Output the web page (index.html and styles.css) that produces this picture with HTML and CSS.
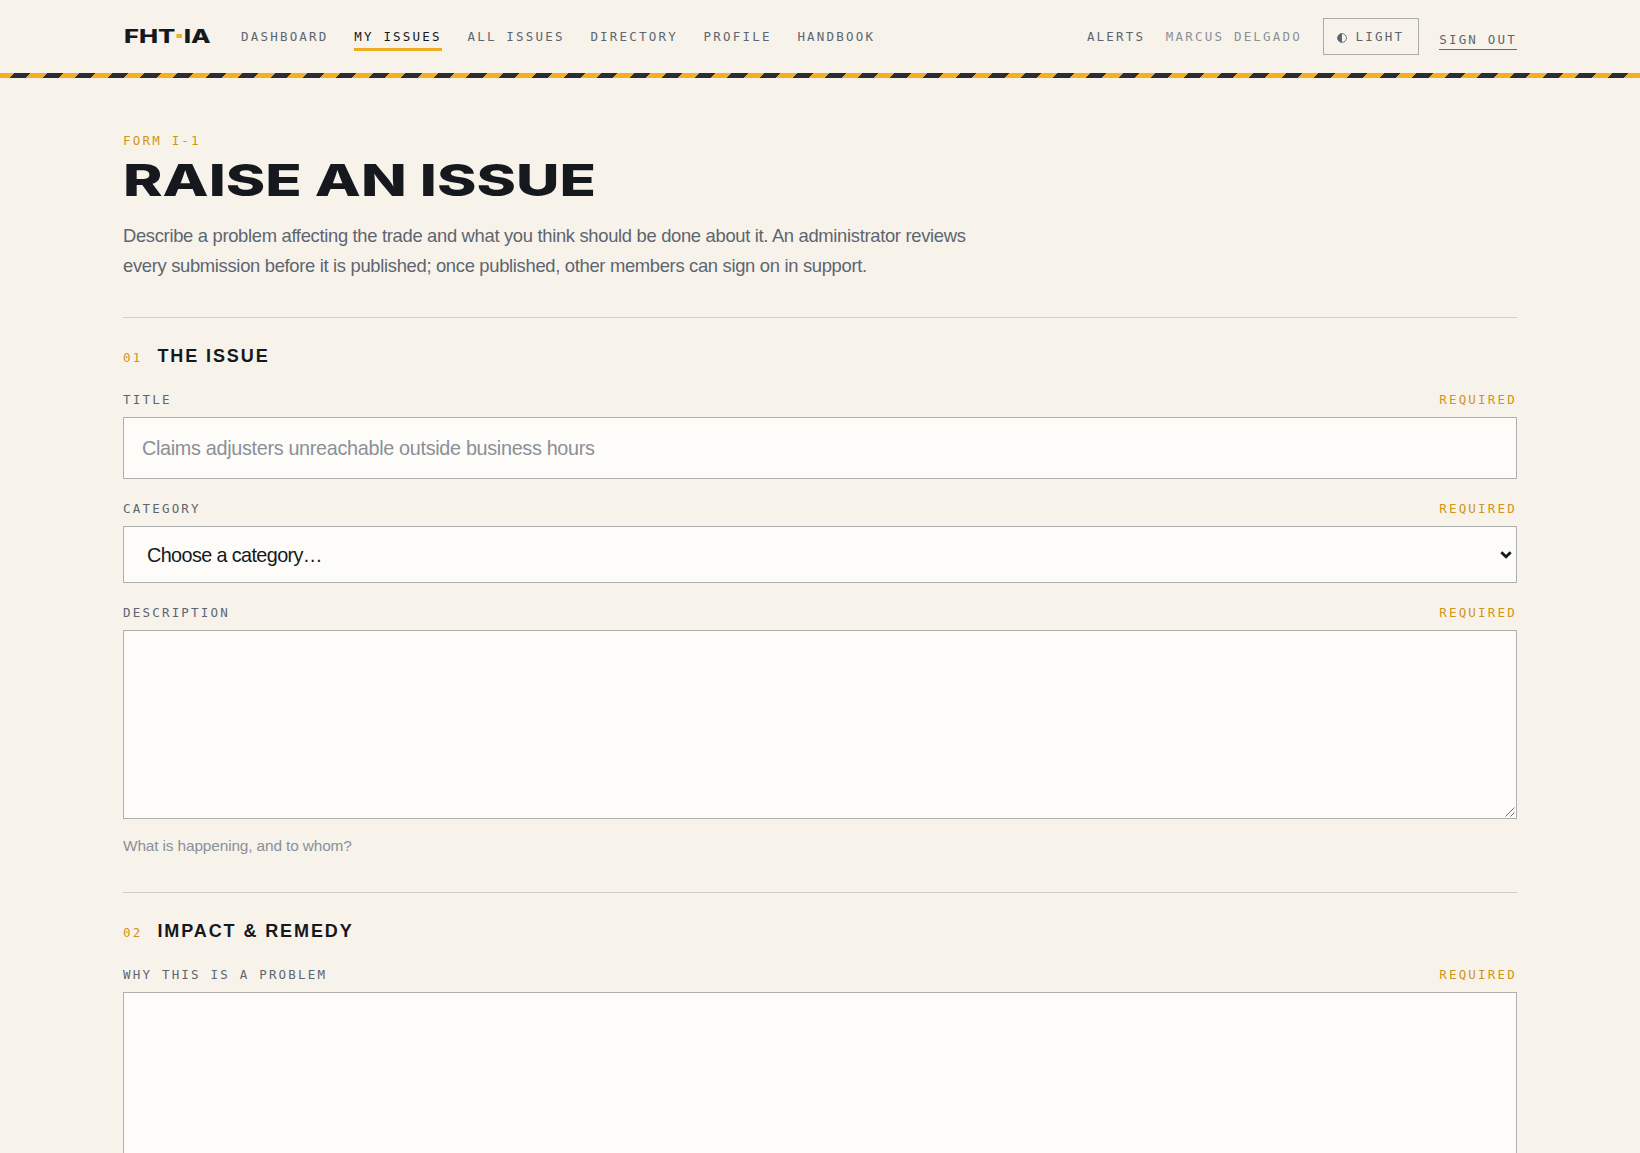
FILE: index.html
```html
<!DOCTYPE html>
<html lang="en">
<head>
  <meta charset="UTF-8">
  <title>Raise an Issue</title>
  <link rel="stylesheet" href="styles.css">
</head>
<body>
  <header class="site-header">
    <div class="header-inner">
      <a class="logo"><span class="logo-text">FHT<i class="logo-dot"></i>IA</span></a>
      <nav class="main-nav">
        <a>Dashboard</a>
        <a class="active">My Issues</a>
        <a>All Issues</a>
        <a>Directory</a>
        <a>Profile</a>
        <a>Handbook</a>
      </nav>
      <div class="user-nav">
        <a>Alerts</a>
        <span class="user-name">Marcus Delgado</span>
        <button class="theme-btn" type="button">
          <svg class="theme-icon" viewBox="0 0 10 10"><circle cx="5" cy="5" r="4.4" fill="none" stroke="currentColor" stroke-width="0.9"/><path d="M5 .6a4.4 4.4 0 0 0 0 8.8z" fill="currentColor"/></svg>
          <span>Light</span>
        </button>
        <a class="sign-out">Sign out</a>
      </div>
    </div>
    <div class="hazard"></div>
  </header>

  <main class="page">
    <p class="eyebrow">Form I-1</p>
    <h1><span class="wide">Raise an issue</span></h1>
    <p class="lead">Describe a problem affecting the trade and what you think should be done about it. An administrator reviews every submission before it is published; once published, other members can sign on in support.</p>

    <form>
      <section class="form-section">
        <h2><span class="num">01</span><span>The issue</span></h2>
        <div class="field">
          <label for="title"><span>Title</span><span class="required">Required</span></label>
          <input type="text" id="title" placeholder="Claims adjusters unreachable outside business hours">
        </div>
        <div class="field">
          <label for="category"><span>Category</span><span class="required">Required</span></label>
          <div class="control">
            <select id="category">
              <option>Choose a category…</option>
            </select>
            <svg class="chevron" viewBox="0 0 12 8"><path d="M1.3 1.3L6 5.8l4.7-4.5" fill="none" stroke="currentColor" stroke-width="2.8"/></svg>
          </div>
        </div>
        <div class="field">
          <label for="description"><span>Description</span><span class="required">Required</span></label>
          <div class="control">
            <textarea id="description"></textarea>
            <svg class="grip" viewBox="0 0 10 10"><path d="M.5 9.5l9-9M5.5 9.5l4-4" fill="none" stroke="currentColor"/></svg>
          </div>
          <p class="hint">What is happening, and to whom?</p>
        </div>
      </section>

      <section class="form-section">
        <h2><span class="num">02</span><span>Impact &amp; remedy</span></h2>
        <div class="field">
          <label for="why"><span>Why this is a problem</span><span class="required">Required</span></label>
          <textarea id="why"></textarea>
        </div>
      </section>
    </form>
  </main>
</body>
</html>
```

FILE: styles.css
```css
* {
  box-sizing: border-box;
}
html {
  height: 100%;
  overflow: hidden;
}
body {
  margin: 0;
  height: 100%;
  overflow: hidden;
  background-color: #f7f3eb;
  color: #15181d;
  font-family: "Liberation Sans", Arial, sans-serif;
}
h1, h2, p {
  margin: 0;
}

/* header */
.header-inner {
  display: flex;
  align-items: center;
  height: 73px;
  padding: 0 123px;
}
.header-inner, .eyebrow, label, .num, .theme-btn {
  font-family: "DejaVu Sans Mono", monospace;
  font-size: 12.5px;
  line-height: 16px;
  letter-spacing: 2.2px;
  text-transform: uppercase;
  color: #5d6570;
}
.logo {
  width: 118px;
  padding-left: 1px;
  color: #15181d;
}
.logo-text {
  display: inline-block;
  font-family: Inter, sans-serif;
  font-weight: 800;
  font-size: 18.5px;
  line-height: 20px;
  letter-spacing: 0;
  transform: scaleX(1.38);
  transform-origin: left;
}
.logo-dot {
  display: inline-block;
  width: 3.6px;
  height: 4.5px;
  margin: 0 1.5px 5px 1px;
  background-color: #f5ae1d;
}
.main-nav {
  display: flex;
  gap: 25.7px;
}
.main-nav a {
  padding: 7px 0 3px;
  border-bottom: 3px solid transparent;
}
.main-nav .active {
  color: #15181d;
  border-bottom-color: #eaac20;
}
.user-nav {
  display: flex;
  align-items: center;
  gap: 20.6px;
  margin-left: auto;
}
.user-name {
  color: #8b9097;
}
.theme-btn {
  display: flex;
  align-items: center;
  gap: 9px;
  width: 96px;
  height: 37px;
  padding: 0 0 0 13px;
  border: 1px solid #a9adac;
  background: none;
}
.theme-icon {
  width: 10px;
  height: 10px;
  margin-top: 2px;
}
.sign-out {
  margin-top: 8px;
  padding-bottom: 1px;
  border-bottom: 1px solid #5d6b7a;
}
.hazard {
  height: 5px;
  background: repeating-linear-gradient(-45deg, #f5b020 0, #f5b020 11.53px, #2b2d33 11.53px, #2b2d33 23.06px);
}

/* page */
.page {
  padding: 55px 123px 0;
}
.eyebrow {
  color: #d0941a;
}
h1 {
  height: 69px;
  padding-top: 5px;
  font-family: Inter, sans-serif;
  font-size: 44px;
  font-weight: 800;
  line-height: 52px;
  text-transform: uppercase;
}
.wide {
  display: inline-block;
  transform: scaleX(1.36);
  transform-origin: left;
}
.lead {
  max-width: 860px;
  padding-top: 3px;
  font-size: 18.4px;
  line-height: 29.5px;
  letter-spacing: -0.32px;
  color: #5d6570;
}
.form-section {
  margin-top: 37.4px;
  border-top: 1px solid #cfcfca;
  padding-top: 26px;
}
.form-section + .form-section {
  margin-top: 36px;
}
h2 {
  display: flex;
  align-items: baseline;
  gap: 15px;
  margin-bottom: 24px;
  font-size: 18px;
  line-height: 24px;
  letter-spacing: 1.9px;
  text-transform: uppercase;
}
.num {
  font-weight: normal;
  color: #d0941a;
}
.field {
  margin-bottom: 22px;
}
label {
  display: flex;
  justify-content: space-between;
  margin-bottom: 9px;
}
.required {
  color: #d0941a;
}
.control {
  position: relative;
}
input, select, textarea {
  display: block;
  width: 100%;
  padding: 0 18px;
  border: 1px solid #adb0af;
  border-radius: 0;
  background-color: #fdfcf9;
  color: #15181d;
  font-family: "Liberation Sans", Arial, sans-serif;
  font-size: 19.8px;
  letter-spacing: -0.31px;
}
input {
  height: 62px;
}
input::placeholder {
  color: #8b9097;
}
select {
  appearance: none;
  height: 57px;
  padding-left: 23px;
  letter-spacing: -0.6px;
}
.chevron {
  position: absolute;
  top: 25px;
  right: 5px;
  width: 12px;
  height: 8px;
}
textarea {
  height: 189px;
  resize: none;
}
.grip {
  position: absolute;
  right: 2px;
  bottom: 2px;
  width: 10px;
  height: 10px;
  color: #6f7275;
}
.hint {
  margin-top: 17px;
  font-size: 15.4px;
  line-height: 20px;
  letter-spacing: -0.13px;
  color: #8b9097;
}
```
